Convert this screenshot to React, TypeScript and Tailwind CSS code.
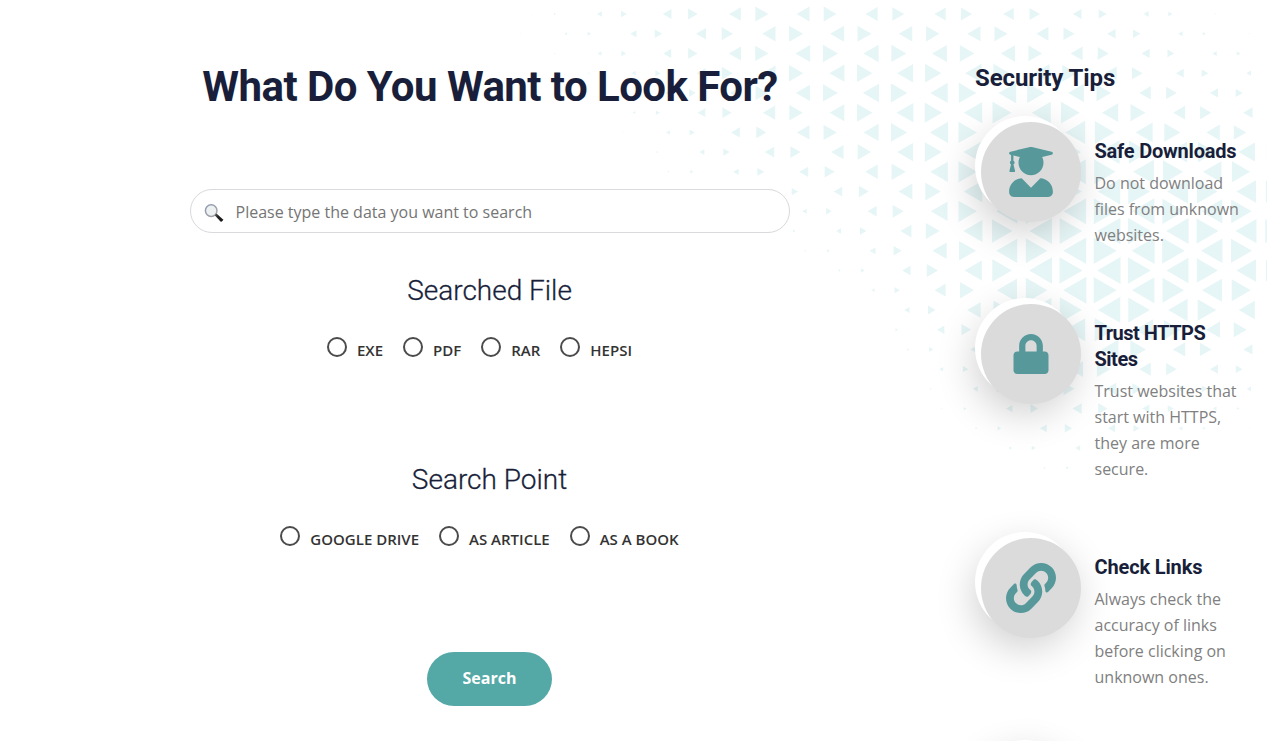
import { FaUserGraduate, FaLock, FaLink } from "react-icons/fa";
import type { IconType } from "react-icons";

const ROW = 19.73;
const PERIOD = 68.34;

// Size profile of each pattern row: [x, triangle height] control points.
const PROFILES: [number, number][][] = [
  [[525, 0.6], [555, 2], [599, 4.7], [623, 5.6], [667, 8.5], [691, 9.6], [737, 11.8], [760, 13], [828, 12.8], [873, 12], [942, 11.3], [1010, 10.6], [1033, 10.3], [1078, 8.8], [1101, 8], [1147, 5], [1170, 4], [1215, 1.2], [1238, 0.7], [1250, 0]],
  [[510, 0.6], [520, 1], [565, 2.5], [588, 3.5], [633, 6], [656, 7.3], [702, 10], [725, 11.3], [771, 13.3], [793, 14], [862, 14], [930, 13.3], [998, 13], [1044, 12], [1067, 11], [1112, 8.4], [1135, 7.4], [1180, 4.5], [1203, 3], [1248, 1.2], [1272, 0]],
  [[525, 0.5], [555, 1.3], [599, 3.7], [623, 4.7], [667, 7.7], [691, 9.3], [737, 12.2], [760, 13.2], [805, 14.7], [828, 15.2], [896, 15], [942, 14.7], [1010, 14.2], [1033, 13.7], [1078, 12], [1101, 11], [1147, 8], [1170, 6.7], [1215, 4.3], [1238, 3.6], [1300, 1]],
  [[560, 0.7], [588, 1.7], [633, 4], [656, 5.2], [702, 9], [725, 11], [771, 13.5], [793, 14.2], [839, 15], [862, 15.4], [930, 16.2], [998, 16.3], [1044, 15.5], [1067, 14.8], [1112, 11.8], [1135, 10.5], [1180, 7.7], [1203, 6.6], [1248, 4.5], [1275, 3.8]],
  [[590, 0.5], [623, 1.6], [667, 5], [691, 6.7], [737, 10.4], [760, 12.3], [805, 14], [828, 14.9], [873, 16], [896, 16.6], [942, 17.4], [1010, 17.7], [1033, 17.5], [1078, 15.7], [1101, 14.5], [1147, 11.5], [1170, 10.7], [1215, 8], [1238, 7], [1290, 5]],
  [[570, 0], [588, 0.7], [633, 2.6], [656, 3.8], [702, 7.7], [725, 9.2], [771, 12.3], [793, 13.4], [839, 14.7], [862, 15.6], [907, 16.8], [930, 17.5], [975, 18.5], [998, 19], [1044, 19], [1067, 18.7], [1112, 16.2], [1135, 15], [1180, 12], [1203, 11.3], [1248, 9.4], [1275, 8]],
  [[600, 0], [623, 0.9], [667, 3.7], [691, 5], [737, 8.8], [760, 10], [805, 12.5], [828, 13.3], [873, 15], [896, 16.2], [942, 18.2], [965, 18.6], [1010, 20], [1078, 20], [1101, 19.6], [1147, 17], [1170, 16], [1215, 13.5], [1238, 12.5], [1290, 11]],
  [[615, 0], [633, 0.8], [656, 1.7], [702, 4.8], [725, 6.3], [771, 9.4], [793, 10.3], [839, 12.3], [862, 13.4], [907, 15.8], [930, 17.1], [975, 19], [998, 20], [1044, 21], [1112, 20.5], [1135, 20], [1180, 18], [1203, 17.5], [1248, 16.5], [1275, 16]],
  [[650, 0], [667, 1.7], [691, 3], [737, 5.4], [760, 6.8], [805, 9], [828, 10], [873, 12.5], [896, 14.2], [942, 17.5], [965, 18.5], [1010, 20.5], [1078, 21.6], [1147, 20.8], [1215, 18.5], [1290, 17.5]],
  [[690, 0], [702, 1.2], [725, 2.5], [771, 5], [793, 6.3], [839, 8.5], [862, 10], [907, 13.8], [930, 15.4], [975, 18.5], [998, 20], [1044, 22], [1112, 22.3], [1180, 21], [1248, 19.5], [1275, 19]],
  [[735, 0], [760, 1.7], [805, 4.3], [828, 5.5], [873, 9], [896, 11], [942, 16.7], [965, 18.4], [1010, 21], [1078, 22.5], [1147, 22.4], [1215, 21], [1290, 19.5]],
  [[750, 0], [771, 1.2], [793, 2.4], [839, 4.9], [862, 6.4], [907, 11], [930, 13.8], [975, 19], [998, 20.3], [1044, 22.5], [1112, 23], [1180, 22.4], [1248, 21], [1275, 20.5]],
  [[785, 0], [805, 1.5], [828, 2.8], [873, 5.8], [896, 8.2], [942, 14.2], [965, 17], [1010, 21], [1078, 23], [1147, 23], [1215, 21.4], [1290, 20]],
  [[820, 0], [839, 2.2], [862, 3.7], [907, 8.2], [930, 11.2], [975, 17.1], [998, 19.4], [1044, 22.8], [1112, 23.3], [1180, 22], [1248, 19.5], [1275, 18.5]],
  [[850, 0], [873, 3.1], [896, 5.3], [942, 11], [965, 14.2], [1010, 20], [1033, 21.5], [1078, 23.3], [1147, 22.4], [1215, 20], [1290, 17]],
  [[845, 0], [862, 0.8], [907, 5.2], [930, 7.6], [975, 13.4], [998, 16.3], [1044, 21], [1067, 22], [1112, 22.4], [1135, 21.7], [1180, 19.4], [1203, 18.7], [1248, 16], [1275, 15]],
  [[860, 0], [873, 0.8], [896, 2.5], [942, 7.3], [965, 9.7], [1010, 15], [1033, 17.2], [1078, 20], [1101, 20.2], [1147, 18], [1170, 16.8], [1215, 14], [1238, 13], [1290, 10]],
  [[885, 0], [907, 2.1], [930, 4], [975, 8.5], [998, 10.5], [1044, 15], [1067, 16.7], [1112, 16.8], [1135, 15.7], [1180, 12.3], [1203, 11.5], [1248, 9], [1275, 8]],
  [[915, 0], [942, 3.8], [965, 5.5], [1010, 9.5], [1033, 11], [1078, 13.5], [1101, 13.5], [1147, 11.5], [1170, 10.5], [1215, 8], [1238, 6.8], [1290, 5]],
  [[910, 0], [930, 1.7], [975, 4.7], [998, 6.3], [1044, 10], [1067, 11], [1112, 10.7], [1135, 9.7], [1180, 7], [1203, 6], [1248, 4.3], [1275, 3]],
  [[925, 0], [942, 1.2], [965, 2.8], [1010, 6.4], [1033, 7.5], [1078, 9.3], [1101, 9.3], [1147, 7.2], [1170, 6], [1215, 3.7], [1238, 2.5], [1290, 1]],
  [[955, 0], [975, 1.8], [998, 3.5], [1044, 6.8], [1067, 7.3], [1112, 7], [1135, 6], [1180, 3.6], [1203, 2.6], [1248, 1], [1270, 0]],
  [[985, 0], [1010, 2.7], [1033, 4], [1078, 4.7], [1101, 4.6], [1147, 3], [1170, 2.3], [1215, 0.8], [1230, 0]],
  [[980, 0], [998, 0.8], [1044, 2], [1067, 2.7], [1112, 2.4], [1135, 1.7], [1180, 0.7], [1195, 0]],
];

function sizeAt(profile: [number, number][], x: number): number {
  for (let i = 1; i < profile.length; i++) {
    const [x0, s0] = profile[i - 1];
    const [x1, s1] = profile[i];
    if (x >= x0 && x <= x1) return s0 + ((s1 - s0) * (x - x0)) / (x1 - x0);
  }
  return 0;
}

function Pattern() {
  const shapes: string[] = [];
  PROFILES.forEach((profile, row) => {
    const y = 14 + row * ROW;
    const start = 736.9 - PERIOD * 4 + (row % 2 ? PERIOD / 2 : 0);
    for (let k = 0; k < 14; k++) {
      const left = start + k * PERIOD;
      for (const [cx, dir] of [[left, -1], [left + 22.75, 1]]) {
        const s = sizeAt(profile, cx);
        if (s < 0.4) continue;
        const base = cx - (dir * s) / 3;
        const half = s / Math.sqrt(3);
        shapes.push(`M${base} ${y - half}V${y + half}L${base + dir * s} ${y}Z`);
      }
    }
  });
  return (
    <svg className="pointer-events-none absolute inset-0" width="1267" height="741" aria-hidden="true">
      <path d={shapes.join("")} fill="#e6f5f6" />
    </svg>
  );
}

function Magnifier() {
  return (
    <svg width="20" height="20" viewBox="0 0 20 20" aria-hidden="true">
      <defs>
        <linearGradient id="rim" x1="0" y1="0" x2="1" y2="1">
          <stop offset="0" stopColor="#8f9bb3" />
          <stop offset="1" stopColor="#a5a5a5" />
        </linearGradient>
        <linearGradient id="grip" x1="0" y1="0" x2="1" y2="1">
          <stop offset="0" stopColor="#666" />
          <stop offset="0.4" stopColor="#222" />
          <stop offset="1" stopColor="#151515" />
        </linearGradient>
      </defs>
      <circle cx="7.2" cy="7.6" r="5.8" fill="#eef1f2" stroke="url(#rim)" strokeWidth="1.5" />
      <path d="M10.7 12.3l1.8-1.8 6.3 5.7q.6.9-.4 1.9-1 1-1.9.4z" fill="url(#grip)" />
    </svg>
  );
}

function RadioGroup({ title, options }: { title: string; options: string[] }) {
  return (
    <section className="flex flex-col items-center">
      <h2 className="font-[Roboto] text-[28px] leading-[34px] font-light text-[#191f3a] [-webkit-text-stroke:0.3px_#191f3a]">{title}</h2>
      <div className="mt-7 flex h-7">
        {options.map((option) => (
          <label key={option} className="mr-5 flex items-start">
            <span className="mt-px mr-[10px] size-5 rounded-full border-2 border-[#4b4b4b] bg-white" />
            <span className="pt-[3px] text-[15px] leading-[22px] font-semibold text-[#333]">{option}</span>
          </label>
        ))}
      </div>
    </section>
  );
}

type TipProps = { icon: IconType; iconClass: string; title: string; titleClass?: string; text: string };

function Tip({ icon: Icon, iconClass, title, titleClass = "", text }: TipProps) {
  return (
    <article className="flex items-start">
      <div className="size-[100px] shrink-0 rounded-full bg-white shadow-[0_15px_40px_rgba(0,0,0,0.2)]">
        <div className="relative top-1.5 left-1.5 flex size-[100px] items-center justify-center rounded-full bg-[#dbdbdb] pr-px">
          <Icon className={iconClass} />
        </div>
      </div>
      <div className="ml-[19.5px] w-[153px] pt-[22px]">
        <h3 className={`font-[Roboto] text-[20px] leading-[26px] font-bold text-[#191f3a] ${titleClass}`}>{title}</h3>
        <p className="mt-[6px] text-[16px] leading-[26px] text-[#808080]">{text}</p>
      </div>
    </article>
  );
}

export default function App() {
  return (
    <div className="relative h-[741px] w-[1267px] overflow-hidden bg-white font-['Open_Sans',sans-serif]">
      <Pattern />
      <div className="relative flex">
        <main className="ml-[190px] flex w-[600px] flex-col items-center pt-[60px]">
          <h1 className="h-[54px] font-[Roboto] text-[42px] leading-[54px] font-bold tracking-[-0.55px] whitespace-nowrap text-[#191f3a]">
            What Do You Want to Look For?
          </h1>
          <div className="mt-[75px] flex h-11 w-full items-center rounded-full border border-[#d9d9de] bg-white pl-[13px]">
            <div className="pt-[3px]">
              <Magnifier />
            </div>
            <input
              className="ml-[11.5px] flex-1 pt-[2px] text-[16px] outline-none placeholder:text-[#757575]"
              placeholder="Please type the data you want to search"
            />
          </div>
          <div className="mt-[41px] flex h-[189px] w-[599px] justify-center self-start">
            <RadioGroup title="Searched File" options={["EXE", "PDF", "RAR", "HEPSI"]} />
          </div>
          <div className="flex h-[189px] w-[599px] justify-center self-start">
            <RadioGroup title="Search Point" options={["GOOGLE DRIVE", "AS ARTICLE", "AS A BOOK"]} />
          </div>
          <button className="mr-px h-[54px] w-[125px] rounded-full bg-[#54a9a7] pb-[2px] text-[16px] font-bold text-white">Search</button>
        </main>
        <aside className="ml-[185px] w-[280px] pt-[62px]">
          <h2 className="h-[30px] font-[Roboto] text-[24px] leading-[32px] font-bold tracking-[-0.1px] text-[#191f3a]">Security Tips</h2>
          <div className="mt-6 flex flex-col gap-[50px]">
            <Tip icon={FaUserGraduate} iconClass="size-[50px] text-[#57999b]" title="Safe Downloads" titleClass="tracking-[-0.2px]" text="Do not download files from unknown websites." />
            <Tip icon={FaLock} iconClass="size-10 text-[#57999b]" title="Trust HTTPS Sites" titleClass="tracking-[-0.5px]" text="Trust websites that start with HTTPS, they are more secure." />
            <Tip icon={FaLink} iconClass="size-[50px] text-[#57999b]" title="Check Links" titleClass="tracking-[-0.15px]" text="Always check the accuracy of links before clicking on unknown ones." />
            <Tip icon={FaLock} iconClass="size-10 text-[#57999b]" title="" text="" />
          </div>
        </aside>
      </div>
    </div>
  );
}
